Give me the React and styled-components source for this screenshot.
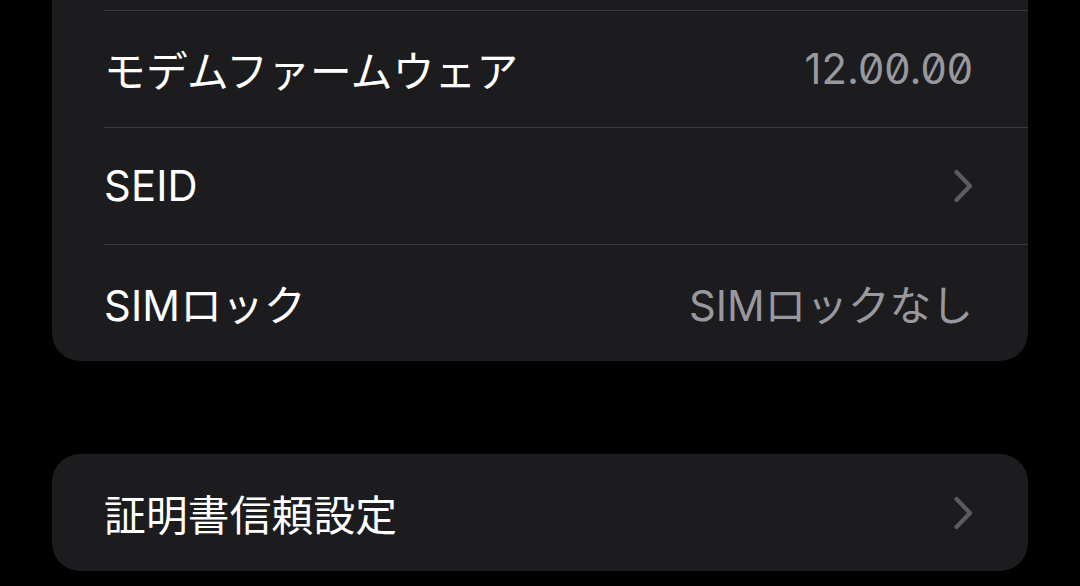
import React from "react";
import styled, { createGlobalStyle } from "styled-components";

const Global = createGlobalStyle`
  html, body { margin: 0; padding: 0; background: #000; }
  body {
    width: 1080px; height: 586px; overflow: hidden;
    font-family: Inter, "Noto Sans CJK JP", "Noto Sans", sans-serif;
    -webkit-font-smoothing: antialiased;
  }
`;

const Page = styled.div`
  display: flex;
  flex-direction: column;
  gap: 93px;
  padding: 0 52px;
  margin-top: -107px;
`;

const Card = styled.div`
  background: #1c1c1e;
  border-radius: 28px;
  overflow: hidden;
`;

const Row = styled.div`
  height: 117px;
  padding-left: 52px;
  display: flex;
`;

const RowInner = styled.div`
  flex: 1;
  display: flex;
  align-items: center;
  justify-content: space-between;
  padding-right: 55px;
  border-top: ${(p) => (p.$sep ? "1px solid #38383a" : "none")};
  box-sizing: border-box;
`;

const Label = styled.span`
  color: #ffffff;
  font-size: 41.7px;
  letter-spacing: 0.2px;
`;

const Value = styled.span`
  color: #98989f;
  font-size: 41.7px;
  font-feature-settings: "zero" 1;
`;

const Chevron = () => (
  <svg width="20" height="34" viewBox="0 0 20 34" fill="none">
    <path d="M3.5 3 L17 17 L3.5 31" stroke="#5b5b60" strokeWidth="4.2" strokeLinecap="round" strokeLinejoin="round" />
  </svg>
);

const Item = ({ label, value, chevron, sep }) => (
  <Row>
    <RowInner $sep={sep}>
      <Label>{label}</Label>
      {value && <Value>{value}</Value>}
      {chevron && <Chevron />}
    </RowInner>
  </Row>
);

export default function App() {
  return (
    <>
      <Global />
      <Page>
        <Card>
          <Item label="" />
          <Item label="モデムファームウェア" value="12.00.00" sep />
          <Item label="SEID" chevron sep />
          <Item label="SIMロック" value="SIMロックなし" sep />
        </Card>
        <Card>
          <Item label="証明書信頼設定" chevron />
        </Card>
      </Page>
    </>
  );
}
